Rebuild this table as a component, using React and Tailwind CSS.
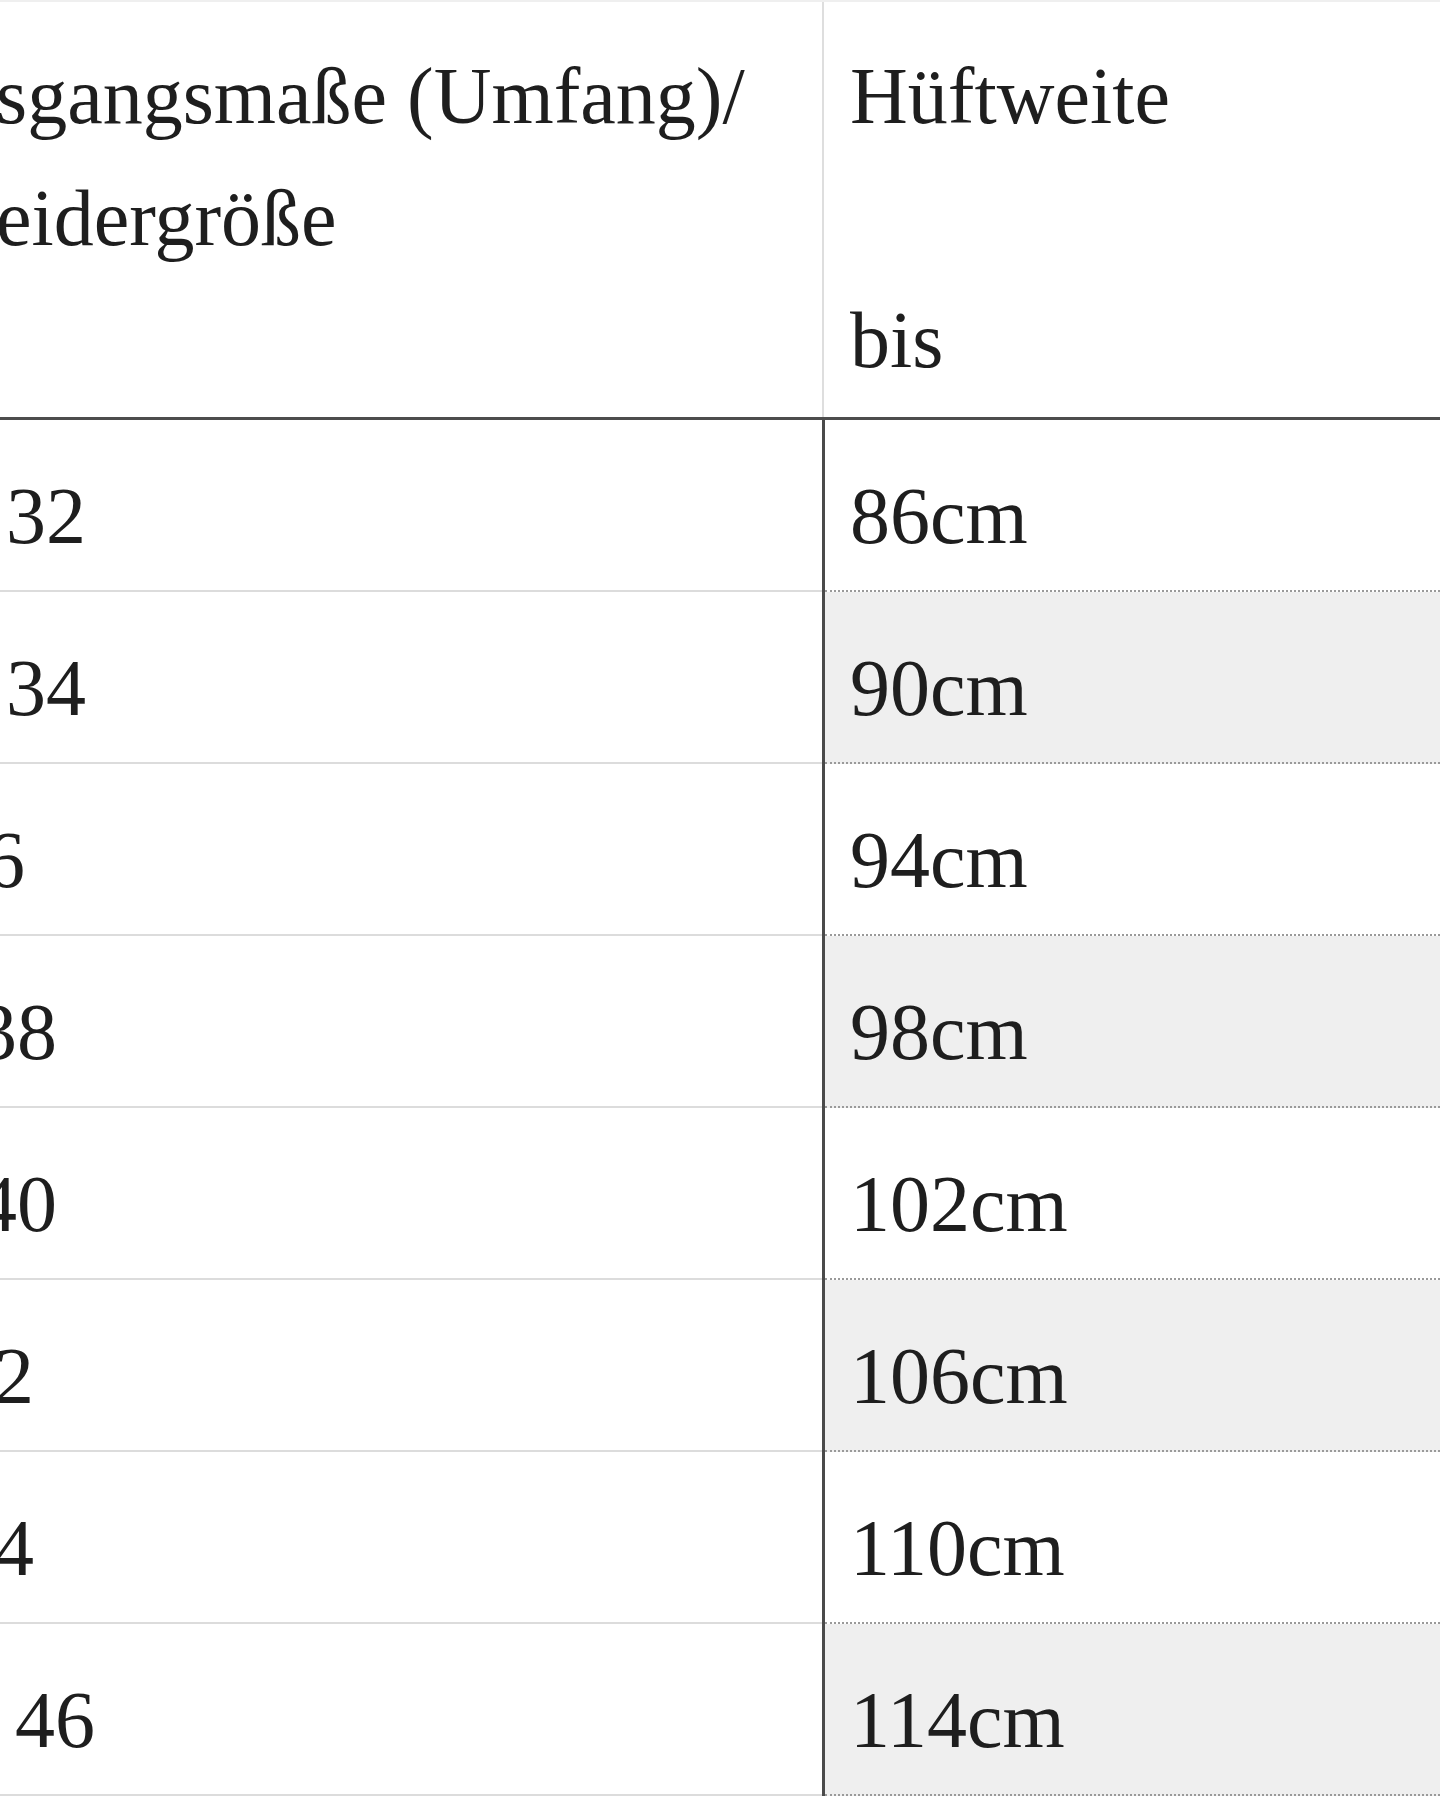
import React from 'react';

// sichtbarer Ausschnitt einer Größentabelle (linke Spalte ist angeschnitten)
const rows = [
  { size: '32', shift: 'ml-[6px]', hip: '86cm' },
  { size: '34', shift: 'ml-[6px]', hip: '90cm' },
  { size: '36', shift: '-ml-[55px]', hip: '94cm' },
  { size: '38', shift: '-ml-[23px]', hip: '98cm' },
  { size: '40', shift: '-ml-[23px]', hip: '102cm' },
  { size: '42', shift: '-ml-[46px]', hip: '106cm' },
  { size: '44', shift: '-ml-[46px]', hip: '110cm' },
  { size: '46', shift: 'ml-[15px]', hip: '114cm' },
];

const App = () => {
  return (
    <div
      className="w-[1440px] h-[1800px] overflow-hidden bg-white text-[#1e1e1e] text-[80px] leading-[122px]"
      style={{ fontFamily: '"Liberation Serif", "Times New Roman", serif' }}
    >
      {/* Kopfzeile */}
      <div className="flex h-[420px] border-t-2 border-t-[#efefef] border-b-[3px] border-b-[#4d4d4d]">
        <div className="w-[822px] shrink-0 pt-[33px] whitespace-nowrap">
          <div className="-ml-[4px]">
            sgangsmaße (Umfang)/
            <br />
            eidergröße
          </div>
        </div>
        <div className="flex-1 pt-[33px] pl-[26px] border-l-2 border-l-[#dedede]">
          <div>Hüftweite</div>
          <div>&nbsp;</div>
          <div>bis</div>
        </div>
      </div>

      {/* Zeilen */}
      {rows.map((row, i) => (
        <div key={row.size} className="flex h-[172px]">
          <div className="w-[822px] shrink-0 pt-[35px] whitespace-nowrap border-b-2 border-solid border-b-[#dcdcdc]">
            <span className={`inline-block ${row.shift}`}>{row.size}</span>
          </div>
          <div className="w-[3px] shrink-0 bg-[#4a4a4a]" />
          <div
            className={`flex-1 pt-[35px] pl-[25px] border-b-2 border-dotted border-b-[#9a9a9a] ${
              i % 2 === 1 ? 'bg-[#efefef]' : 'bg-white'
            }`}
          >
            {row.hip}
          </div>
        </div>
      ))}
    </div>
  );
};

export default App;
